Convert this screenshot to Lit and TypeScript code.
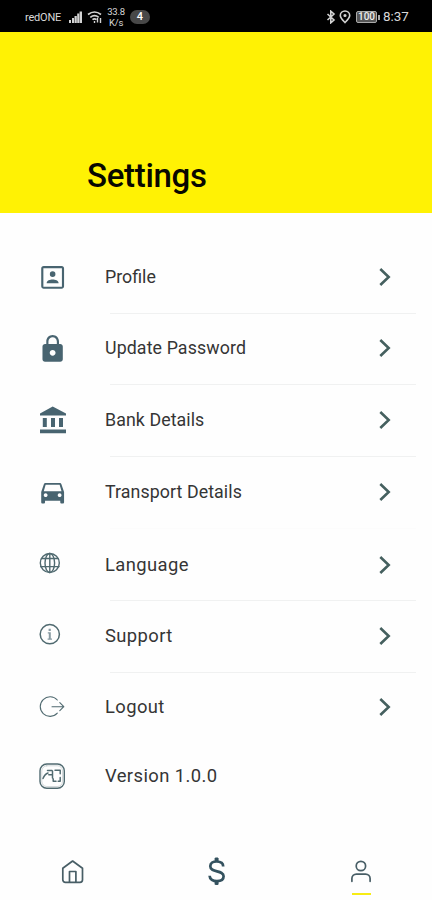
import { LitElement, html, svg, css, TemplateResult, SVGTemplateResult } from "lit";
import { customElement, property } from "lit/decorators.js";

interface Entry {
  label: string;
  icon: SVGTemplateResult;
  height: number;
  lift: number;
  size: number;
  spacing: number;
  arrow: boolean;
  line: "none" | "faint" | "normal";
}

// Row icons, drawn on a 40 x 40 canvas.
const icons = {
  profile: svg`<g transform="translate(5.4 5.2) scale(1.27)"><path d="M19 3H5a2 2 0 0 0-2 2v14c0 1.1.9 2 2 2h14c1.100 0 2-.9 2-2V5a2 2 0 0 0-2-2zm.3 16.300H4.700V4.700h14.600zM12 11.600a2.200 2.200 0 1 0 0-4.400 2.200 2.200 0 0 0 0 4.400zM7.300 16.500c0-2 2.700-2.800 4.700-2.800s4.700.8 4.700 2.800z"/></g>`,
  lock: svg`<g transform="translate(5.400 5.800) scale(1.270)"><path d="M18 8h-1V6c0-2.760-2.240-5-5-5S7 3.240 7 6v2H6c-1.100 0-2 .9-2 2v10c0 1.100.9 2 2 2h12c1.100 0 2-.9 2-2V10c0-1.100-.9-2-2-2zm-6 9.300c-1.300 0-2.300-1-2.300-2.300s1-2.300 2.300-2.300 2.300 1 2.300 2.300-1 2.300-2.300 2.300zm3.300-9.300H8.700V6c0-1.800 1.500-3.300 3.300-3.300s3.300 1.500 3.300 3.300v2z"/></g>`,
  bank: svg`<path d="M20.700 6.500 34 13.500V15.500H8v-2zM10.800 18h4v9h-4zM19 18h4v9h-4zM27 18h4v9h-4zM8 29.500h26v3.700H8z"/>`,
  car: svg`<g transform="translate(5.400 6) scale(1.270)"><path d="M18.920 5.010C18.720 4.420 18.160 4 17.500 4h-11c-.66 0-1.210.42-1.420 1.010L3 11v8c0 .55.45 1 1 1h1c.55 0 1-.45 1-1v-1h12v1c0 .55.45 1 1 1h1c.55 0 1-.45 1-1v-8l-2.080-5.990zM6.500 15c-.83 0-1.500-.67-1.500-1.500S5.670 12 6.500 12s1.500.67 1.500 1.500S7.330 15 6.500 15zm11 0c-.83 0-1.500-.67-1.500-1.500s.67-1.500 1.500-1.500 1.500.67 1.500 1.500-.67 1.500-1.500 1.500zM5 10.500l1.500-5.200h11L19 10.500H5z"/></g>`,
  globe: svg`<g class="stroke" stroke-width="1.400"><circle cx="17.800" cy="18" r="9.500"/><ellipse cx="17.800" cy="18" rx="4.800" ry="9.500"/><path d="M17.800 8.500v19M9.500 13.500h16.600M8.600 21.600h18.400"/></g>`,
  info: svg`<g class="stroke" stroke-width="1.500"><circle cx="17.800" cy="18.200" r="9.600"/></g><path opacity=".65" d="M15.800 16.300h3v6.200h1.200v1.200h-4.400v-1.200h1.200v-5h-1zM16.600 12.700h2.200v2.200h-2.200z"/>`,
  logout: svg`<g class="stroke" stroke-width="1.100"><path d="M25.300 13a9.800 9.800 0 1 0 0 13.200M20 19.700h11.800M27.800 15.700l4 4-4 4"/></g>`,
  version: svg`<g class="stroke"><rect x="8" y="8" width="24.300" height="24.300" rx="6.800" stroke-width="1.400"/><rect x="9.800" y="9.800" width="20.700" height="20.700" rx="5" stroke-width=".8" opacity=".3"/><path stroke-width="1.500" d="M11 22.500q1.800-4.500 5-5.500M15.500 14.500h4.500M16.800 18.700h2.700M20.500 15v7M23 14.200h5.200v3.500M28.200 21.500v3.800h-2M24 25.300h-2.800v-2.500"/></g>`,
};

const entries: Entry[] = [
  { label: "Profile", icon: icons.profile, height: 73, lift: 2, size: 17.8, spacing: 0, arrow: true, line: "normal" },
  { label: "Update Password", icon: icons.lock, height: 71, lift: 3, size: 17.8, spacing: 0.11, arrow: true, line: "normal" },
  { label: "Bank Details", icon: icons.bank, height: 72, lift: 2, size: 17.8, spacing: 0.08, arrow: true, line: "normal" },
  { label: "Transport Details", icon: icons.car, height: 72, lift: 2, size: 17.8, spacing: 0.08, arrow: true, line: "faint" },
  { label: "Language", icon: icons.globe, height: 72, lift: 0, size: 18.4, spacing: 0.4, arrow: true, line: "normal" },
  { label: "Support", icon: icons.info, height: 72, lift: 2, size: 18.4, spacing: 0.4, arrow: true, line: "normal" },
  { label: "Logout", icon: icons.logout, height: 69, lift: 2, size: 18.4, spacing: 0.4, arrow: true, line: "none" },
  { label: "Version 1.0.0", icon: icons.version, height: 69, lift: 1, size: 18.4, spacing: 0.4, arrow: false, line: "none" },
];

@customElement("status-bar")
class StatusBar extends LitElement {
  static styles = css`
    :host { display: flex; align-items: center; height: 32px; padding: 2px 23px 0 25px; box-sizing: border-box; background: #000; color: #d8d8d8; font: 11px/1 Roboto, sans-serif; }
    svg { display: block; flex: none; }
    .carrier { width: 43px; font-size: 11px; white-space: nowrap; letter-spacing: -0.2px; }
    .wifi { margin-left: 4px; }
    .speed { width: 22px; margin-left: 2px; font-size: 9.5px; line-height: 11px; text-align: center; letter-spacing: -0.2px; }
    .count { width: 20px; height: 14px; margin-left: 3px; border-radius: 8px; background: #484848; color: #fff; font-weight: 500; line-height: 14px; text-align: center; }
    .gap { flex: 1; }
    .pin { margin: 0 5px 0 3px; }
    .battery { box-sizing: border-box; width: 21px; height: 12px; border: 1px solid #aaa; border-radius: 2px; background: #555; font-size: 10px; font-weight: 500; line-height: 10px; text-align: center; color: #eee; }
    .cap { width: 2px; height: 5px; margin: 0 3px 0 1px; background: #aaa; }
    .time { width: 26px; font-size: 13.4px; letter-spacing: 0; white-space: nowrap; }
  `;
  render(): TemplateResult {
    return html`
      <span class="carrier">redONE</span>
      <svg width="15" height="14" viewBox="0 0 15 14" fill="#d2d2d2"><path d="M1 10h2v3H1zM4 8h2v5H4zM6.500 6h2.300v7H6.500zM9.200 3.500h2V13h-2zM11.600 1.500h2.400V13h-2.400z"/></svg>
      <svg class="wifi" width="16" height="14" viewBox="0 0 16 14" fill="none" stroke="#d2d2d2" stroke-width="1.700"><path d="M1 4.500q6.500-5 13 0M3.300 7.300q4.200-3.300 8.400 0M5.500 9.700q2-1.600 4 0"/><path d="M7.500 11v2M10.500 8v4.500M13.500 13V8" stroke-width="1.400"/></svg>
      <span class="speed">33.8<br />K/s</span>
      <span class="count">4</span>
      <span class="gap"></span>
      <svg width="10" height="14" viewBox="0 0 10 14" fill="none" stroke="#d2d2d2" stroke-width="1.600"><path d="m1.500 4 6.500 6-3.200 2.800V1.200L8 4l-6.500 6"/></svg>
      <svg class="pin" width="12" height="14" viewBox="0 0 12 14" fill="none" stroke="#d2d2d2" stroke-width="1.600"><path d="M6 12.500C3.500 10 1.300 8 1.300 5.500a4.700 4.500 0 0 1 9.400 0C10.700 8 8.500 10 6 12.500z"/><circle cx="6" cy="5.500" r=".8" fill="#d2d2d2"/></svg>
      <span class="battery">100</span><span class="cap"></span>
      <span class="time">8:37</span>`;
  }
}

@customElement("settings-row")
class SettingsRow extends LitElement {
  @property({ attribute: false }) entry!: Entry;
  static styles = css`
    :host { display: block; }
    .row { position: relative; display: flex; align-items: center; box-sizing: border-box; padding: 0 35px 0 32px; }
    .icon { display: block; flex: none; fill: #486470; }
    .stroke { fill: none; stroke: #506a70; stroke-linecap: round; stroke-linejoin: round; }
    .label { flex: 1; margin-left: 33px; color: #353535; line-height: 24px; font-family: Roboto, sans-serif; white-space: nowrap; }
    .arrow { display: block; fill: none; stroke: #45605f; stroke-width: 2.600; }
    .line { position: absolute; left: 110px; right: 16px; bottom: 0; height: 1px; background: #f0f1f1; }
    .faint { background: #fcfcfc; }
  `;
  render(): TemplateResult {
    const e = this.entry;
    return html`<div class="row" style="height:${e.height}px;padding-bottom:${e.lift}px">
      <svg class="icon" width="40" height="40" viewBox="0 0 40 40">${e.icon}</svg>
      <span class="label" style="font-size:${e.size}px;letter-spacing:${e.spacing}px">${e.label}</span>
      ${e.arrow ? html`<svg class="arrow" width="20" height="24" viewBox="0 0 20 24"><path d="m3.300 4 8.400 8-8.400 8"/></svg>` : ""}
      ${e.line === "none" ? "" : html`<span class="line ${e.line}"></span>`}
    </div>`;
  }
}

@customElement("app-root")
class AppRoot extends LitElement {
  static styles = css`
    :host { display: flex; flex-direction: column; box-sizing: border-box; width: 432px; height: 900px; overflow: hidden; background: #fefefe; }
    .header { display: flex; align-items: flex-end; box-sizing: border-box; height: 181px; padding: 0 0 17px 87px; background: #fff204; }
    h1 { margin: 0; color: #080800; font: 500 33px/40px Roboto, sans-serif; letter-spacing: -0.3px; }
    .list { flex: 1; padding-top: 28px; }
    .nav { display: grid; grid-template-columns: repeat(3, 144px); height: 56px; }
    .tab { display: flex; flex-direction: column; align-items: center; }
    .tab svg { display: block; fill: none; stroke: #485e66; stroke-width: 1.700; stroke-linecap: round; stroke-linejoin: round; }
    .tab .dollar { stroke: #34525f; stroke-width: 2.700; stroke-linecap: butt; }
    .active { width: 19px; height: 2px; margin: 5px 0 0 2px; background: #f7ec14; }
  `;
  render(): TemplateResult {
    return html`
      <status-bar></status-bar>
      <header class="header"><h1>Settings</h1></header>
      <main class="list">${entries.map((e) => html`<settings-row .entry=${e}></settings-row>`)}</main>
      <nav class="nav">
        <div class="tab"><svg width="32" height="44" viewBox="0 0 32 44"><path d="M6.800 24.200 16.600 17l9.900 7.200v11.600a2.500 2.500 0 0 1-2.500 2.500H9.300a2.500 2.500 0 0 1-2.500-2.500z"/><path d="M13.500 38v-10.500h6.400V38"/></svg></div>
        <div class="tab"><svg class="dollar" width="32" height="44" viewBox="0 0 32 44"><path d="M16.600 13.500v4.500M16.600 36v5M23.200 22.500c0-3.500-3-5-6.600-5s-6.300 1.700-6.300 4.700c0 7 13.300 3.300 13.300 10 0 3.300-3 4.900-6.700 4.900s-7.300-1.800-7.300-5.300"/><path d="M16.600 14v3M16.600 37.500v3" stroke-width="4"/></svg></div>
        <div class="tab"><svg width="32" height="44" viewBox="0 0 32 44"><circle cx="16.900" cy="22" r="4.700"/><path d="M7.900 37.300v-2.700a4.500 4.500 0 0 1 4.500-4.500h9.200a4.500 4.500 0 0 1 4.500 4.500v2.700"/></svg><span class="active"></span></div>
      </nav>`;
  }
}
